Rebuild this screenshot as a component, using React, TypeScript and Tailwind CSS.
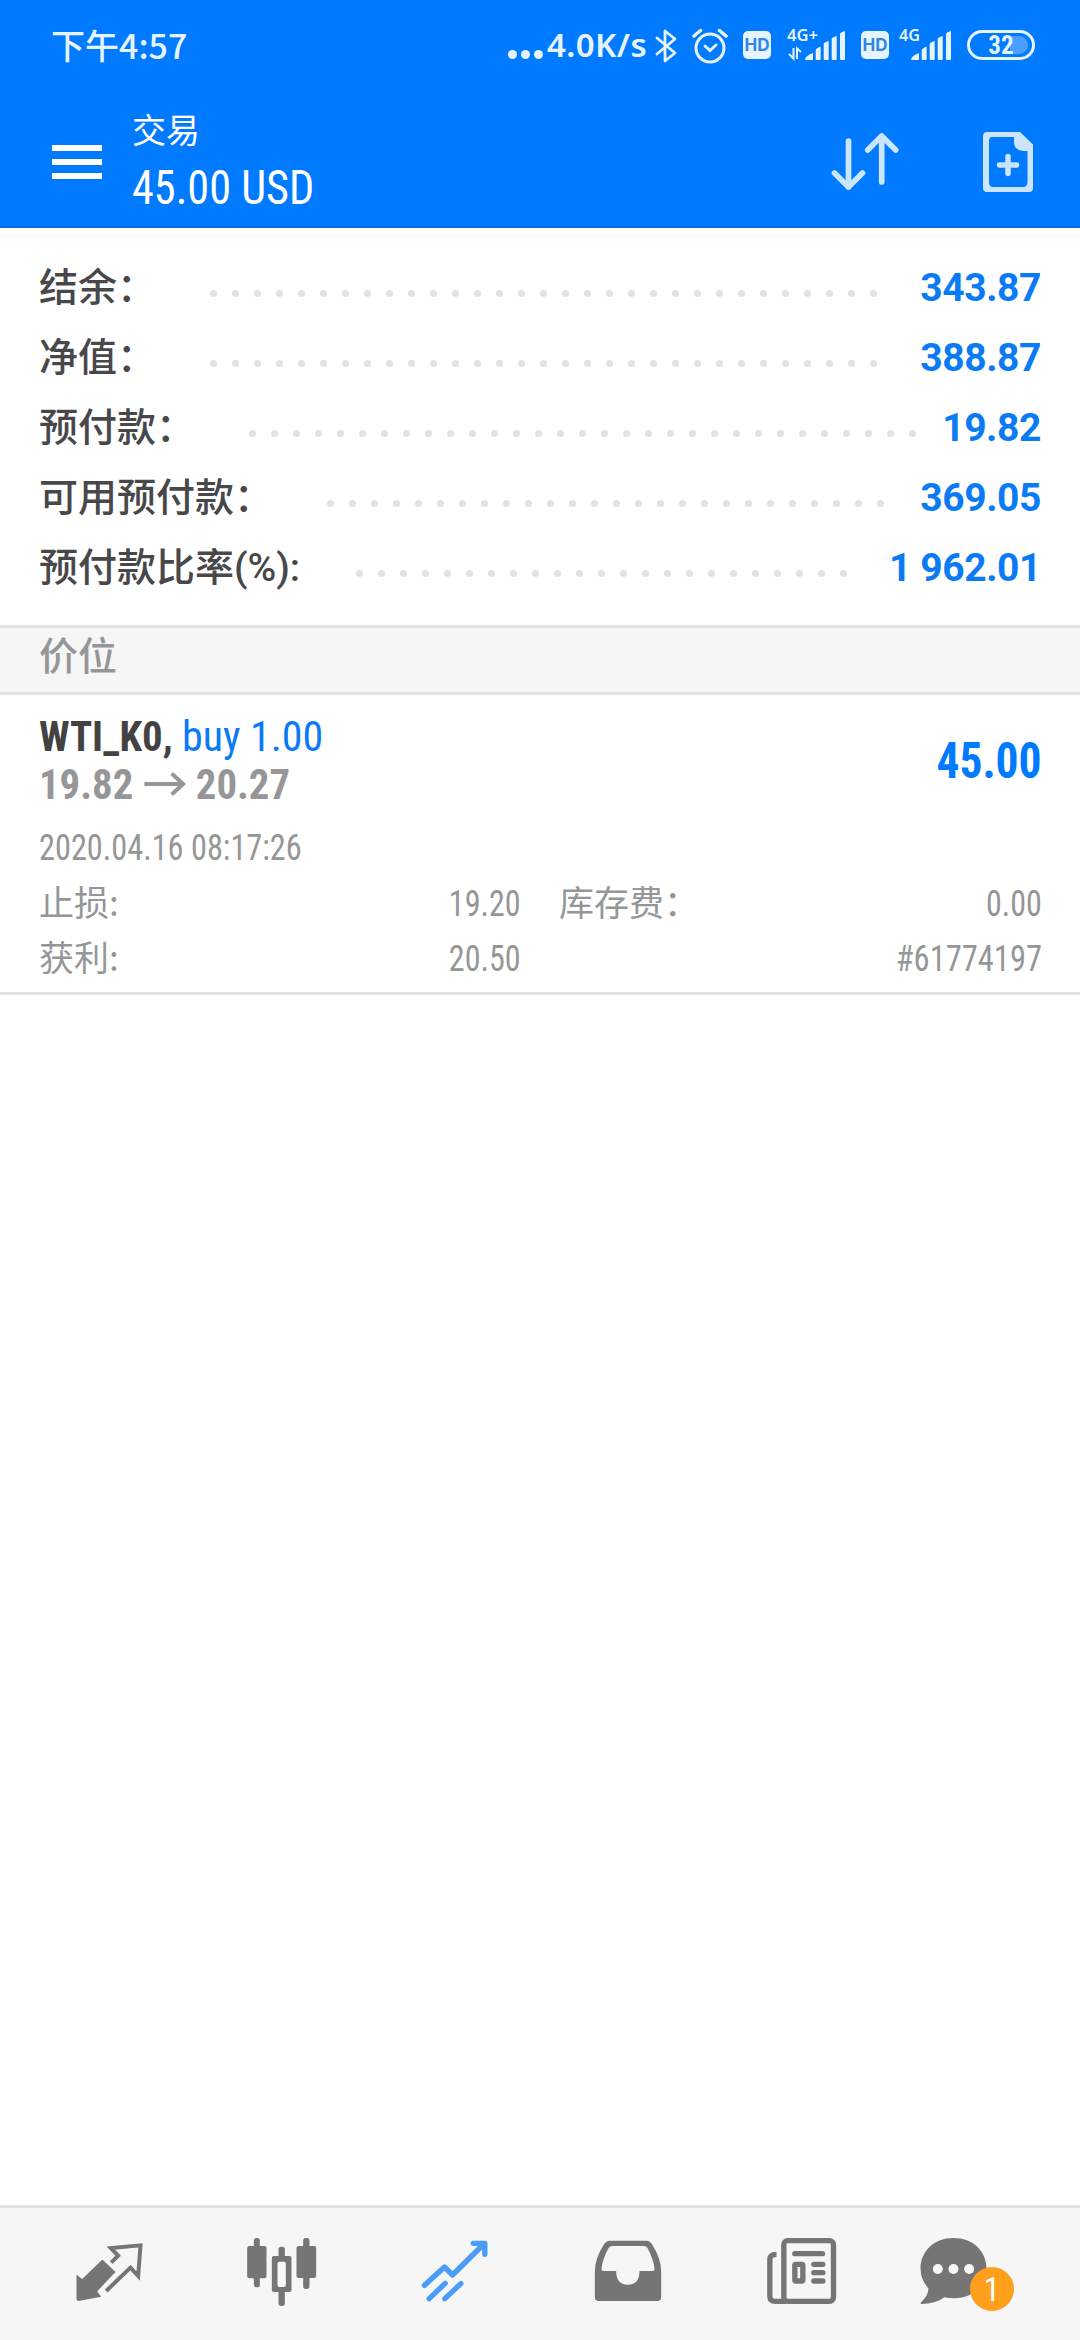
import React from 'react';

const accountRows = [
  { label: '结余：', value: '343.87', start: 'ml-[54px]', dots: 31 },
  { label: '净值：', value: '388.87', start: 'ml-[54px]', dots: 31 },
  { label: '预付款：', value: '19.82', start: 'ml-[54px]', dots: 31 },
  { label: '可用预付款：', value: '369.05', start: 'ml-[54px]', dots: 26 },
  { label: '预付款比率(%):', value: '1 962.01', start: 'ml-[56px]', dots: 23 },
];

const SignalBars = () => (
  <g fill="#e6f4ff">
    <path d="M0 30 Q0 26 8 23 V30 Z" />
    <path d="M10.700 20 Q10.700 18.500 15.700 16.500 V29 Q15.700 30 14.700 30 H11.700 Q10.700 30 10.700 29 Z" />
    <path d="M18.700 14 Q18.700 12.500 23.700 11 V29 Q23.700 30 22.700 30 H19.700 Q18.700 30 18.700 29 Z" />
    <path d="M26.700 9 Q26.700 7.500 31.700 6 V29 Q31.700 30 30.700 30 H27.700 Q26.700 30 26.700 29 Z" />
    <path d="M35 4 Q35 2.500 40 1 V29 Q40 30 39 30 H36 Q35 30 35 29 Z" />
  </g>
);

const HdIcon = () => (
  <div className="mb-[2px] flex h-7 w-7 items-center justify-center rounded-[5px] bg-[#e6f4ff] font-['Inter',sans-serif] text-[17px] font-bold leading-none text-[#2f86e8]">
    HD
  </div>
);

const StatusBar = () => (
  <div className="flex h-[92px] items-center pl-[51px] pr-[45px] text-[#e6f4ff]">
    <span className="mb-[3px] font-['Noto_Sans_CJK_SC',sans-serif] text-[34px] font-medium leading-none">下午4:57</span>
    <div className="ml-auto flex items-center">
      <div className="mt-4 flex gap-1">
        <i className="size-[9px] rounded-full bg-[#e6f4ff]"></i>
        <i className="size-[9px] rounded-full bg-[#e6f4ff]"></i>
        <i className="size-[9px] rounded-full bg-[#e6f4ff]"></i>
      </div>
      <span className="mb-[3px] ml-1 w-[104px] whitespace-nowrap font-['Noto_Sans',sans-serif] text-[33px] font-semibold leading-none tracking-[0.4px]">4.0K/s</span>
      <svg className="ml-[4px] h-9 w-[22px]" viewBox="0 0 22 36" fill="none" stroke="#e6f4ff" strokeWidth="2.8" strokeLinejoin="round" strokeLinecap="round">
        <path d="M2 10 L20 25 L10 33 V3 L20 11 L2 26" />
      </svg>
      <svg className="ml-[15px] h-9 w-9" viewBox="0 0 36 36" fill="none" stroke="#e6f4ff" strokeWidth="3" strokeLinecap="round">
        <circle cx="18" cy="20" r="14" />
        <path d="M13 18 L18 22.500 L24 17" />
        <path d="M2 8 L8.500 2.500 M27.500 2.500 L34 8" strokeWidth="3.500" />
      </svg>
      <div className="ml-[15px]"><HdIcon /></div>
      <svg className="mb-[5px] ml-4 h-[48px] w-[58px] overflow-visible" viewBox="0 -12 58 48">
        <text x="0" y="9" textLength="31" lengthAdjust="spacingAndGlyphs" className="font-['Noto_Sans',sans-serif] text-[16px] font-semibold" fill="#e6f4ff">4G+</text>
        <path d="M6.500 16 V26.500 L2 22 M10 27 V16.500 L14 20" fill="none" stroke="#e6f4ff" strokeWidth="2" />
        <g transform="translate(18 -2)"><SignalBars /></g>
      </svg>
      <div className="ml-4"><HdIcon /></div>
      <svg className="mb-[5px] ml-[10px] h-[48px] w-[52px] overflow-visible" viewBox="0 -12 52 48">
        <text x="0" y="9" textLength="21" lengthAdjust="spacingAndGlyphs" className="font-['Noto_Sans',sans-serif] text-[16px] font-semibold" fill="#e6f4ff">4G</text>
        <g transform="translate(12 -2)"><SignalBars /></g>
      </svg>
      <div className="relative mb-[2px] ml-4 flex h-[30px] w-[68px] items-center justify-center overflow-hidden rounded-full border-[3px] border-[#e6f4ff]">
        <i className="absolute left-[40px] top-[3px] h-[18px] w-[18px] rounded-r-full bg-[#4aa0ff]"></i>
        <span className="relative font-['Roboto',sans-serif] text-[25px] font-bold leading-none [font-stretch:85%]">32</span>
      </div>
    </div>
  </div>
);

const Header = () => (
  <div className="flex h-[136px] border-b-2 border-[#0a6be0] pl-[52px] text-white">
    <div className="mt-[53px] flex w-[50px] flex-col gap-2">
      <i className="h-[6px] bg-white"></i>
      <i className="h-[6px] bg-white"></i>
      <i className="h-[6px] bg-white"></i>
    </div>
    <div className="ml-[30px] mt-[17px] flex flex-col">
      <span className="font-['Noto_Sans_CJK_SC',sans-serif] text-[34px] leading-[40px]">交易</span>
      <span className="mt-[11px] origin-left scale-x-[0.922] whitespace-nowrap font-['Roboto_Condensed','Roboto',sans-serif] text-[48px] leading-[56px] [font-stretch:75%]">45.00 USD</span>
    </div>
    <svg className="ml-auto mt-[38px] h-[64px] w-[70px]" viewBox="0 0 70 64" fill="none" stroke="#cce5ff" strokeWidth="5.700" strokeLinecap="round" strokeLinejoin="round">
      <path d="M18.500 11 V57 M4.500 43 L18.500 57 L32.500 43" />
      <path d="M51.700 52 V6 M37.700 20 L51.700 6 L65.700 20" />
    </svg>
    <svg className="ml-[83px] mr-[47px] mt-10 h-[60px] w-[50px]" viewBox="0 0 50 60">
      <path d="M4 0 H37 L50 12.500 V56 Q50 60 46 60 H4 Q0 60 0 56 V4 Q0 0 4 0 Z M9 5 Q6 5 6 9 V50 Q6 55 10 55 H40 Q44.500 55 44.500 50 V19 H40 Q31 18 31 10 V5 Z" fill="#cce5ff" fillRule="evenodd" />
      <path d="M16.500 33 H33.500 M25 24.500 V41.500" stroke="#cce5ff" strokeWidth="5.500" strokeLinecap="round" />
    </svg>
  </div>
);

const DotLeader = ({ count, className }: any) => (
  <div className={`mt-[15px] flex gap-[15px] ${className}`}>
    {Array.from({ length: count }).map((_, i) => (
      <i key={i} className="size-[7px] rounded-full bg-[#e2e2e2]"></i>
    ))}
  </div>
);

const AccountSummary = () => (
  <div className="h-[397px] pl-[39px] pr-[39px] pt-[23px]">
    {accountRows.map((row) => (
      <div key={row.label} className="flex h-[70px] items-center">
        <span className="mt-[5px] whitespace-nowrap font-['Roboto','Noto_Sans_CJK_SC',sans-serif] text-[39px] font-medium leading-none text-[#48484a]">{row.label}</span>
        <DotLeader count={row.dots} className={row.start} />
        <span className="ml-auto mt-[5px] font-['Roboto',sans-serif] text-[39px] font-bold leading-none tracking-[-0.4px] text-[#0a7af5]">{row.value}</span>
      </div>
    ))}
  </div>
);

const Position = () => (
  <div className="h-[300px] border-b-[3px] border-[#e2e2e2] pl-[39px] pr-[38px] text-[#969698]">
    <div className="flex justify-between pt-[17px] font-['Roboto_Condensed','Roboto',sans-serif] [font-stretch:75%]">
      <div className="text-[43px] leading-[48px]">
        <div className="flex">
          <span className="origin-left scale-x-[0.95] font-bold text-[#424242]">WTI_K0,</span>
          <span className="ml-[2px] origin-left scale-x-[0.975] text-[#0a7af5]">buy 1.00</span>
        </div>
        <div className="flex origin-left scale-x-[0.948] items-center font-bold">
          <span>19.82</span>
          <svg className="ml-3 mr-2.5 h-6 w-[44px]" viewBox="0 0 44 24" fill="none" stroke="#969698" strokeWidth="4">
            <path d="M0 12 H41 M29 1.500 L41 12 L29 22.500" />
          </svg>
          <span>20.27</span>
        </div>
      </div>
      <span className="mt-[19px] h-[60px] origin-right scale-x-[0.91] text-[50px] font-bold leading-[60px] text-[#007aff]">45.00</span>
    </div>
    <div className="mt-[16px] origin-left scale-x-[0.897] font-['Roboto_Condensed','Roboto',sans-serif] text-[36px] leading-[48px] [font-stretch:75%]">2020.04.16 08:17:26</div>
    <div className="mt-[1px] grid auto-rows-[55px] grid-cols-[482px_1fr] gap-x-[38px] font-['Roboto_Condensed','Roboto',sans-serif] text-[36px] leading-[55px] [font-stretch:75%]">
      <div className="flex justify-between">
        <span className="font-['Noto_Sans_CJK_SC',sans-serif] text-[35px] font-normal">止损:</span>
        <span className="origin-right scale-x-[0.89] pt-1">19.20</span>
      </div>
      <div className="flex justify-between">
        <span className="font-['Noto_Sans_CJK_SC',sans-serif] text-[35px] font-normal">库存费：</span>
        <span className="origin-right scale-x-[0.89] pt-1">0.00</span>
      </div>
      <div className="flex justify-between">
        <span className="font-['Noto_Sans_CJK_SC',sans-serif] text-[35px] font-normal">获利:</span>
        <span className="origin-right scale-x-[0.89] pt-1">20.50</span>
      </div>
      <div className="origin-right scale-x-[0.903] pt-1 text-right">#61774197</div>
    </div>
  </div>
);

const TabBar = () => (
  <div className="flex h-[135px] items-center border-t-[3px] border-[#e2e2e2] bg-[#f6f6f6] pl-[22px]">
    {/* Quotes */}
    <div className="flex w-[173px] justify-center">
      <svg className="h-[90px] w-[110px]" viewBox="160.5 117 330 270">
        <path d="M307 210 L345 246 L290 304 L302 320 L234 333 Q228 333 228 326 V254 L245 267 L302 212 Q305 208 307 210 Z" fill="#757575" />
        <path d="M332 218 L353 197 L331 174 L420 166 L413 258 L390 233 L317 303" fill="none" stroke="#757575" strokeWidth="12" />
      </svg>
    </div>
    {/* Chart */}
    <div className="flex w-[173px] justify-center">
      <svg className="h-[90px] w-[110px]" viewBox="679.5 117 330 270" fill="#757575">
        <rect x="760" y="144" width="18" height="148" rx="8" />
        <rect x="740" y="168" width="58" height="97" rx="6" />
        <rect x="908" y="144" width="19" height="153" rx="8" />
        <rect x="888" y="168" width="59" height="96" rx="6" />
        <rect x="834" y="170" width="19" height="40" rx="8" />
        <rect x="834" y="296" width="19" height="52" rx="8" />
        <path d="M820 198 H867 Q873 198 873 204 V300 Q873 306 867 306 H820 Q814 306 814 300 V204 Q814 198 820 198 Z" />
        <rect x="831" y="215" width="25" height="76" rx="6" fill="#f8f8f8" />
      </svg>
    </div>
    {/* Trade */}
    <div className="flex w-[173px] justify-center">
      <svg className="h-[90px] w-[110px]" viewBox="118.5 117 330 270" fill="none" stroke="#4a9cf6" strokeWidth="16" strokeLinecap="round" strokeLinejoin="round">
        <path d="M192 286 L252 231 L276 255 L370 162 M338 160 H373 V193" />
        <path d="M206 326 L254 280 M253 326 L301 281" />
      </svg>
    </div>
    {/* History */}
    <div className="flex w-[173px] justify-center">
      <svg className="h-[90px] w-[110px]" viewBox="637.5 117 330 270" fill="#757575">
        <path d="M748 152 H858 Q868 152 874 162 Q902 205 902 245 V322 Q902 333 890 333 H715 Q703 333 703 322 V245 Q703 205 731 162 Q738 152 748 152 Z M758 168 Q747 168 742 178 Q726 210 723 236 Q723 243 730 243 H767 Q767 284 802 284 Q837 284 837 243 H876 Q883 243 882 236 Q879 210 863 178 Q859 168 848 168 Z" fillRule="evenodd" />
      </svg>
    </div>
    {/* News */}
    <div className="flex w-[173px] justify-center">
      <svg className="h-[90px] w-[110px]" viewBox="76.5 117 330 270" fill="none" stroke="#757575" strokeWidth="16" strokeLinecap="round">
        <rect x="190" y="152" width="149" height="182" rx="12" />
        <path d="M168 193 Q148 193 148 208 V318 Q148 334 164 334 H196" strokeLinecap="butt" />
        <path d="M223 191 H306 M280 223 H307 M280 248 H307 M280 273 H307" />
        <rect x="223" y="223" width="24" height="50" rx="3" />
      </svg>
    </div>
    {/* Messages */}
    <div className="relative flex w-[173px] justify-center">
      <svg className="h-[90px] w-[110px]" viewBox="595.5 117 330 270">
        <path d="M699 144 C757 144 798 184 798 235 C798 288 757 325 699 325 Q685 325 672 322 Q645 342 603 342 Q598 341 602 336 Q623 318 624 295 Q600 270 600 235 C600 184 641 144 699 144 Z" fill="#757575" />
        <g fill="#f8f8f8">
          <circle cx="652" cy="237" r="15" />
          <circle cx="699" cy="237" r="15" />
          <circle cx="746" cy="237" r="15" />
        </g>
      </svg>
      <span className="absolute left-[83px] top-[38px] flex size-11 items-center justify-center rounded-full bg-[#ff9f1c] font-['Roboto_Condensed','Roboto',sans-serif] text-[33px] leading-none text-white [font-stretch:75%]">1</span>
    </div>
  </div>
);

const App = () => {
  return (
    <div className="flex h-[2340px] w-[1080px] flex-col overflow-hidden bg-white">
      <div className="bg-[#007aff]">
        <StatusBar />
        <Header />
      </div>
      <AccountSummary />
      <div className="h-[70px] border-b-[3px] border-t-[3px] border-[#e2e2e2] bg-[#f6f6f6] pl-[39px] font-['Noto_Sans_CJK_SC',sans-serif] text-[39px] font-medium leading-[51px] text-[#969698]">价位</div>
      <Position />
      <div className="flex-1"></div>
      <TabBar />
    </div>
  );
};

export default App;
